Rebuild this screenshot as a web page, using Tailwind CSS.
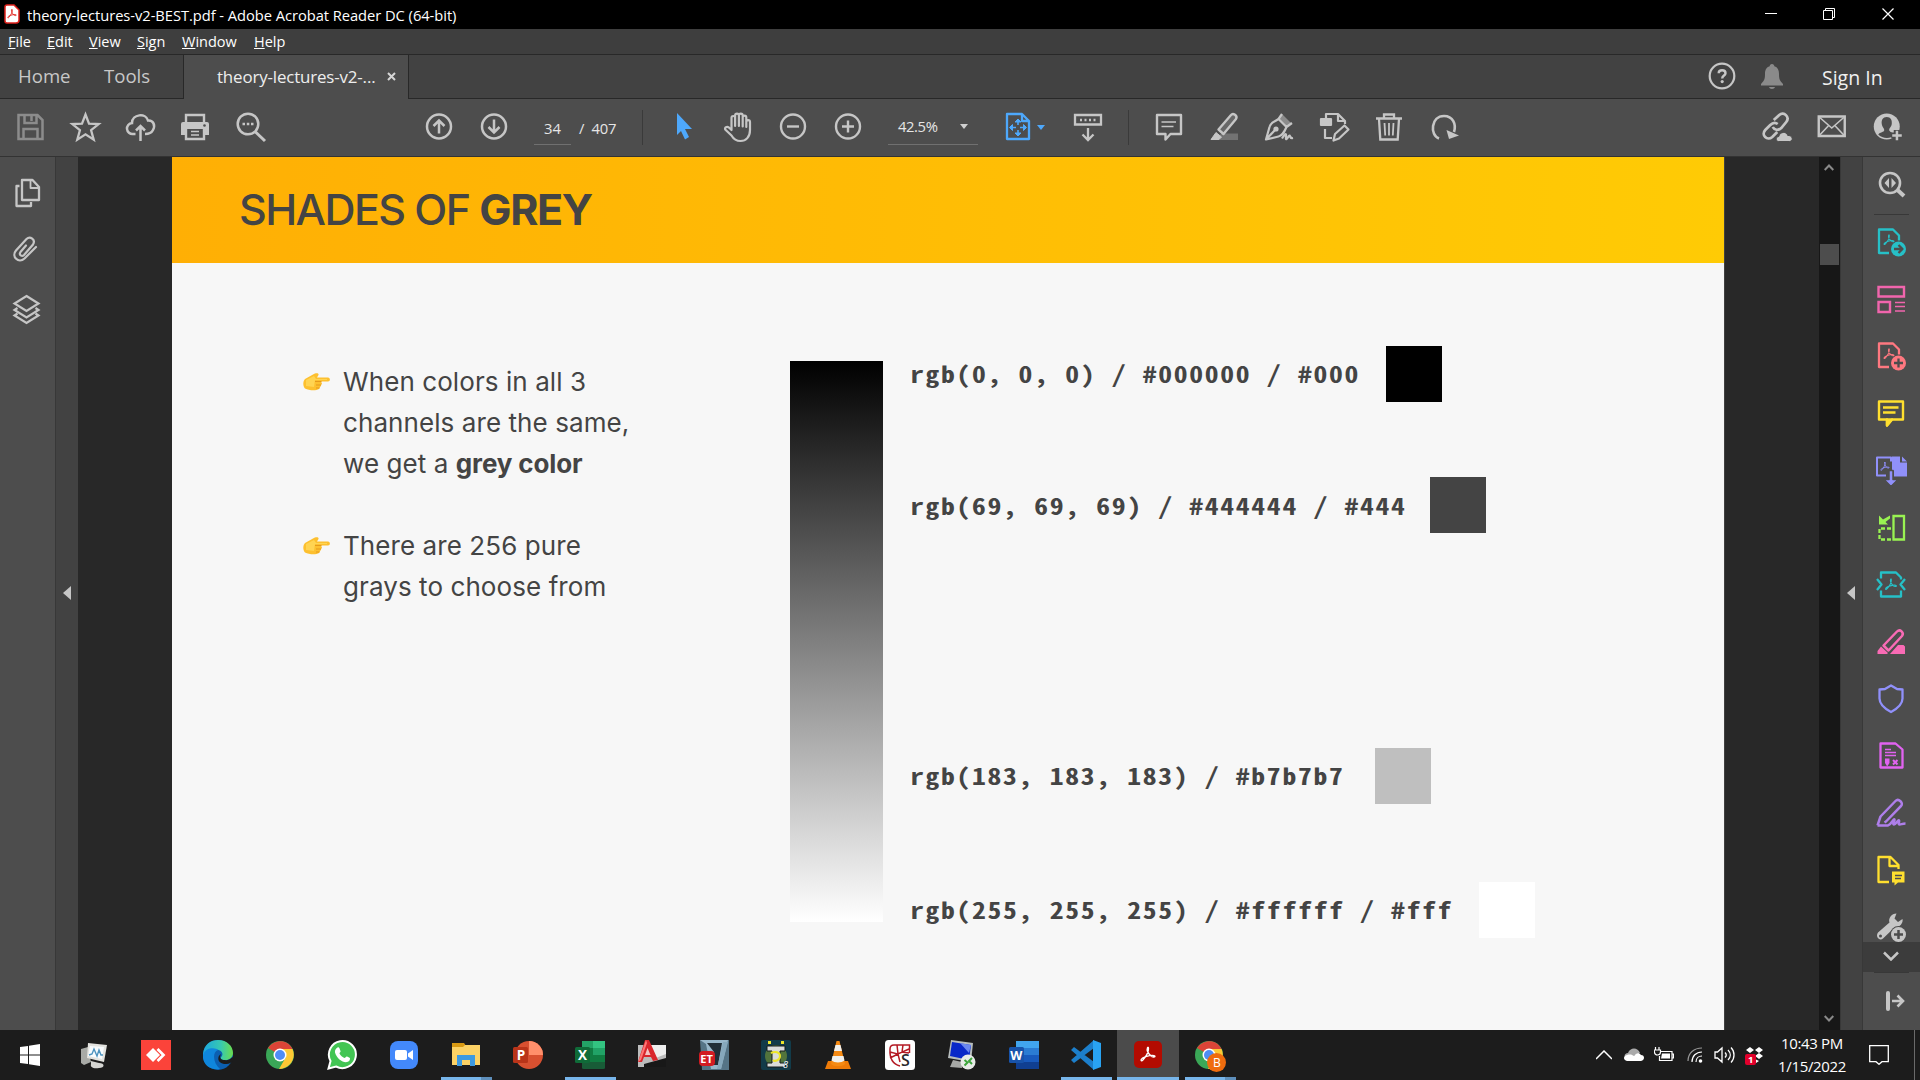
<!DOCTYPE html>
<html lang="en">
<head>
<meta charset="utf-8">
<title>theory-lectures-v2-BEST.pdf - Adobe Acrobat Reader DC (64-bit)</title>
<script src="https://cdn.jsdelivr.net/npm/@tailwindcss/browser@4"></script>
</head>
<body class="w-[1920px] h-[1080px] overflow-hidden bg-[#282828] font-['Open_Sans','Noto_Sans',sans-serif] flex flex-col">

<svg class="hidden">
  <symbol id="pdfmark" viewBox="0 0 20 20"><path fill="none" stroke="currentColor" stroke-width="1.6" stroke-linecap="round" stroke-linejoin="round" d="M9.500 2.500C8.500 5 10.500 9 13 11.500C15 13.500 18.500 13 17.500 11.700C16 10 8 11.500 4 14C1 16 2.500 18.500 4.500 16C7.500 12.500 10.500 7 10.500 3.500C10.500 2 9.900 1.700 9.500 2.500Z"/></symbol>
</svg>

<!-- Title bar -->
<header class="h-[29px] shrink-0 bg-black text-white flex items-center pl-1">
  <svg class="w-4 h-5 mb-px" viewBox="0 0 16 20"><path fill="#fff" stroke="#e0221c" stroke-width="1.500" d="M3 1h7l5 5v10a3 3 0 0 1-3 3H3a2 2 0 0 1-2-2V3a2 2 0 0 1 2-2z"/><use href="#pdfmark" x="2.500" y="4.500" width="11" height="11" color="#e0221c"/></svg>
  <span class="ml-[7px] text-[14.700px] leading-5 tracking-[-0.04px] whitespace-nowrap">theory-lectures-v2-BEST.pdf - Adobe Acrobat Reader DC (64-bit)</span>
  <div class="ml-auto flex h-full">
    <svg class="w-[58px] h-[29px]" viewBox="0 0 58 29"><path stroke="#fff" d="M22 13.500h12"/></svg>
    <svg class="w-[58px] h-[29px]" viewBox="0 0 58 29" fill="none" stroke="#fff"><path d="M22.500 10.500h9v9h-9zM24.500 10v-1.500h9v9H32"/></svg>
    <svg class="w-[61px] h-[29px]" viewBox="0 0 61 29" fill="none" stroke="#fff" stroke-width="1.200"><path d="M23.500 8.500l11 11M34.500 8.500l-11 11"/></svg>
  </div>
</header>

<!-- Menu bar -->
<nav class="h-[26px] shrink-0 bg-[#3e3e3e] border-b border-[#282828] text-white text-[14.500px] leading-[25px] flex pl-2 gap-4">
  <span class="w-[23px] whitespace-nowrap"><u>F</u>ile</span>
  <span class="w-[26px] whitespace-nowrap"><u>E</u>dit</span>
  <span class="w-[32px] whitespace-nowrap"><u>V</u>iew</span>
  <span class="w-[29px] whitespace-nowrap"><u>S</u>ign</span>
  <span class="w-[56px] whitespace-nowrap"><u>W</u>indow</span>
  <span class="whitespace-nowrap"><u>H</u>elp</span>
</nav>

<!-- Document tabs -->
<nav class="h-[44px] shrink-0 bg-[#424242] flex text-[#c8c8c8]">
  <div class="w-[184px] border-r border-b border-[#282828] flex items-center pl-[18px] text-[18.600px] pb-px">
    <span class="w-[86px]">Home</span><span>Tools</span>
  </div>
  <div class="w-[225px] bg-[#4d4d4d] border-r border-[#282828] flex items-center pl-[33px] text-[#ededed] text-[16.900px]">
    <span class="w-[170px] whitespace-nowrap tracking-[-0.15px]">theory-lectures-v2-...</span>
    <svg class="w-[9px] h-[9px] mb-px" viewBox="0 0 9 9"><path stroke="#d6d6d6" stroke-width="2" d="M1 1l7 7M8 1l-7 7"/></svg>
  </div>
  <div class="flex-1 border-b border-[#282828] flex items-center justify-end pr-[30px]">
    <svg class="w-7 h-7 mr-[25px] mb-[2px]" viewBox="0 0 28 28"><circle cx="14" cy="14" r="12.300" fill="none" stroke="#c6c6c6" stroke-width="2.200"/><path fill="none" stroke="#c6c6c6" stroke-width="2.400" d="M10.700 11.300c0-4 6.800-4 6.800 0c0 2.300-3.300 2.200-3.300 5.200"/><circle cx="14.200" cy="19.600" r="1.600" fill="#c6c6c6"/></svg>
    <svg class="w-[22px] h-[26px] mr-[39px]" viewBox="0 0 22 26" fill="#8a8a8a"><path d="M11 0c1.500 0 2.300 1 2.300 2.300c3.500 1 4.700 4 4.700 7.700c0 6.500 1.500 7 4 10v1.500H0V20c2.500-3 4-3.500 4-10c0-3.700 1.200-6.700 4.700-7.700C8.700 1 9.500 0 11 0zM8 23h6c-.5 2.500-5.500 2.500-6 0z"/></svg>
    <span class="w-[68px] text-[19.500px] leading-6 text-[#f0f0f0] font-medium whitespace-nowrap pt-[3px]">Sign In</span>
  </div>
</nav>

<!-- Toolbar -->
<div class="h-[58px] shrink-0 bg-[#4d4d4d] border-b border-[#333] flex items-center text-[#c6c6c6] pl-[3px] pb-px">
  <div class="flex w-[408px] *:w-[55px] *:h-8" >
    <svg viewBox="-11.500 0 55 32" fill="none" stroke="#8c8c8c" stroke-width="2.500"><path d="M4 4h19l5 5v19H4zM9 28V18h14v10M10 4v8h12V4M17 5v5"/></svg>
    <svg viewBox="-11.500 0 55 32" fill="none" stroke="currentColor" stroke-width="2.300"><path d="M16 3.500l3.500 9.100 9.700.5-7.600 6.100 2.600 9.500L16 23.300l-8.200 5.400 2.600-9.500-7.600-6.100 9.700-.5z"/></svg>
    <svg viewBox="-11.500 0 55 32" fill="none" stroke="currentColor" stroke-width="2.500"><path d="M11 23H8.500a5.500 5.500 0 0 1-1-11c0-9 14-10.500 16-2.500c5.500-.5 7.500 5 5 9.500c-1.500 3-4 4-8 4M16 30V15M11.500 19.500L16 15l4.500 4.500"/></svg>
    <svg viewBox="-11 0 55 32" fill="currentColor"><path fill="none" stroke="currentColor" stroke-width="2.400" d="M7 13V4h18v9"/><path d="M4 11h24a2 2 0 0 1 2 2v11h-4v-6H6v6H2V13a2 2 0 0 1 2-2z"/><circle cx="25.500" cy="14.500" r="1.300" fill="#4d4d4d"/><path fill="none" stroke="currentColor" stroke-width="2.400" d="M7 18v10h18V18"/><path stroke="currentColor" stroke-width="1.500" d="M12 20.500h8M12 24h8"/></svg>
    <svg viewBox="-12 0 55 32" fill="none" stroke="currentColor" stroke-width="2.500"><circle cx="13" cy="13" r="10.300"/><path stroke-width="3" d="M20 20.500l10 9.500"/><path stroke-width="2.500" d="M7.500 13H10M11.800 13h2.500M16 13h2.500"/></svg>
  </div>
  <div class="flex *:w-[55px] *:h-8">
    <svg viewBox="-12 0 55 32" fill="none" stroke="currentColor" stroke-width="2.500"><circle cx="16" cy="15.500" r="12"/><path d="M16 22.500V9.500M10.500 15L16 9.500l5.500 5.500"/></svg>
    <svg viewBox="-12 0 55 32" fill="none" stroke="currentColor" stroke-width="2.500"><circle cx="16" cy="15.500" r="12"/><path d="M16 8.500v13M10.500 16l5.500 5.500 5.500-5.500"/></svg>
  </div>
  <div class="w-[121px] flex h-[35px] text-[14.800px] leading-[36px] text-[#e6e6e6] pl-[13px] gap-2">
    <span class="w-[37px] text-center border-b border-[#707070]">34</span><span class="whitespace-pre tracking-[-0.2px]">/  407</span>
  </div>
  <div class="w-px h-[35px] bg-[#3a3a3a]"></div>
  <div class="flex ml-[13px] *:w-[55px] *:h-8">
    <svg viewBox="-12 0 55 32"><path fill="#4ea8fb" d="M9 2l15 16h-7l4 8-4 2.500-4-8.500-4 4z"/></svg>
    <svg viewBox="-11 0 55 32" fill="none" stroke="currentColor" stroke-width="2.200" stroke-linecap="round" stroke-linejoin="round"><path d="M9.500 19V6.800c0-2.400 3.600-2.400 3.600 0V15V4.500c0-2.600 3.800-2.600 3.800 0V15V4.500c0-2.400 3.800-2.400 3.800 0V15.500V6.500c0-2.400 3.600-2.400 3.600 0v9.500V11c0-2.400 3.700-2.400 3.700 0v8c0 7-4 11-9.500 11c-4.500 0-7-2-9-5.500L3.200 18.500c-.8-2.800 2.600-3.500 4.300-1.500z"/></svg>
    <svg viewBox="-11 0 55 32" fill="none" stroke="currentColor" stroke-width="2.400"><circle cx="16" cy="15.500" r="12"/><path d="M10 15.500h12"/></svg>
    <svg viewBox="-11 0 55 32" fill="none" stroke="currentColor" stroke-width="2.400"><circle cx="16" cy="15.500" r="12"/><path d="M10 15.500h12M16 9.500v12"/></svg>
  </div>
  <div class="ml-[12px] w-[90px] h-[35px] border-b border-[#707070] flex items-center text-[14.800px] text-[#e6e6e6] pl-[10px]">
    <span class="w-[62px] tracking-[-0.4px]">42.5%</span>
    <svg class="w-2 h-[5px]" viewBox="0 0 8 5"><path fill="#d0d0d0" d="M0 0h8L4 5z"/></svg>
  </div>
  <div class="ml-[24px] flex items-center">
    <svg class="w-8 h-8 text-[#4ea8fb]" viewBox="0 0 32 32" fill="none" stroke="currentColor" stroke-width="2.300" stroke-linejoin="round"><path d="M5 3h15l7 7v18H5zM20 3v7h7"/><path fill="currentColor" stroke-width="1" d="M16 8l3 3h-6zM16 25l3-3h-6zM7.500 16.500l3-3v6zM24.500 16.500l-3-3v6z"/><path stroke-width="1.600" d="M16 10v4M16 19v4M10 16.500h4M18 16.500h4"/></svg>
    <svg class="w-2 h-[5px] ml-[3px]" viewBox="0 0 8 5"><path fill="#4ea8fb" d="M0 0h8L4 5z"/></svg>
    <svg class="w-8 h-8 ml-[27px]" viewBox="0 0 32 32" fill="none" stroke="currentColor" stroke-width="2.300"><path d="M3 4h26v9.500H3zM16 17v12M10.500 23.500l5.500 5.500 5.500-5.500"/><path d="M8 9h2M12.500 9h2M17 9h2M21.500 9h2"/></svg>
  </div>
  <div class="w-px h-[35px] bg-[#3a3a3a] ml-6"></div>
  <div class="flex ml-[13px] *:w-[55px] *:h-8">
    <svg viewBox="-11 0 55 32" fill="none" stroke="currentColor" stroke-width="2.400" stroke-linejoin="round"><path d="M4 4h24v19H17.500L12.500 28.500V23H4z"/><path stroke-width="1.500" d="M8.500 11h14.500M8.500 15.500h12"/></svg>
    <svg viewBox="-11 0 55 32" fill="none" stroke="currentColor" stroke-width="2.400" stroke-linejoin="round"><path fill="#737373" stroke="none" d="M13 22.500h17V29H9z"/><path fill="#686868" d="M10.500 18.500L23 4c2-2.500 7 .5 5 4L15.500 23z"/><path fill="currentColor" stroke-width="1" d="M8 21.500l5.500 4.500-2.500 2.500H3z"/></svg>
    <svg viewBox="-11 0 55 32" fill="none" stroke="currentColor" stroke-width="2.200" stroke-linejoin="round"><path fill="#8c8c8c" stroke="none" d="M19 3l9 9-4 4-8-8z"/><path d="M19 3l-3.500 5 8 8 5.500-4M15.500 8c-4 3-8 3-9 8L3 28.500l12.500-3c4.500-1 6-5 8-9.500M3 28.500l9-9.500"/><circle cx="13" cy="18" r="1.500" fill="currentColor"/><path d="M19 27.500c3-5 4.500-6 4-1.500s1.500 1 3-1 0 3 4 2"/></svg>
    <svg viewBox="-11 0 55 32" fill="none" stroke="currentColor" stroke-width="2.200" stroke-linejoin="round"><path d="M8 9V3h12l7 7v3M20 3v7h7M7 18v9h7"/><path fill="currentColor" d="M3 8h10v6H3z"/><path d="M17 23L26.500 14.500l4 4L21 27.500l-5.500 2z"/></svg>
    <svg viewBox="-11 0 55 32" fill="none" stroke="currentColor" stroke-width="2.300"><path d="M3 7.500h26M11 7V3.500h10V7M6 8l1.300 20.500h17.400L26 8"/><path stroke-width="1.800" d="M11.500 12l.7 12.500M16 12v12.500M20.500 12l-.7 12.500"/></svg>
    <svg viewBox="-11 0 55 32" fill="none" stroke="currentColor" stroke-width="2.600"><path d="M11 27.500C1.500 24 3 5 16 5c9 0 12.500 8.500 10 16"/><path fill="currentColor" stroke="none" d="M18.500 19L31 24.500l-10 3.500z"/></svg>
  </div>
  <div class="ml-auto mr-[5px] flex *:w-[55.500px] *:h-8">
    <svg viewBox="-11 0 55 32" fill="none" stroke="currentColor" stroke-width="2.700"><path d="M13.500 9L19 4c4.500-4 11 2 7 7l-5 6c-3 3-7 2-8.500-1M17.500 13c-2-1.500-5-1.500-7.500 1l-5 5c-4.500 5 2 11.500 7 7l5-5"/><path fill="currentColor" stroke="#4d4d4d" stroke-width="1" d="M18 30.500c-3-.5-2.500-5 .5-5c1-5 8-5.500 9-1c5-.5 6 5.500 2 6z"/></svg>
    <svg viewBox="-11.500 0 55 32" fill="none" stroke="currentColor" stroke-width="2.400"><path d="M3 5.500h26v19.500H3z"/><path stroke-width="1.600" d="M4 6.500l12 10.500 12-10.500M4 24l8.500-9M28 24l-8.500-9"/></svg>
    <svg viewBox="-11 0 55 32"><circle cx="15.500" cy="15.500" r="13" fill="currentColor"/><path fill="#4d4d4d" d="M15.500 6c4 0 5.500 3 5 7c-.3 3-3 4-2.500 6.500c1 2 4 2 5 4.500C20 28 11 28 7 23.500c1.500-2.500 6-2 6-4.500c0-2-2.200-3-2.500-6c-.5-4 1-7 5-7z"/><path stroke="#4d4d4d" stroke-width="6" d="M20 24.500h11M25.500 19v11"/><path stroke="currentColor" stroke-width="2.500" d="M21 24.500h9.500M25.700 19.700v9.500"/></svg>
  </div>
</div>

<main class="h-[873px] shrink-0 flex">
  <!-- Left navigation pane -->
  <aside class="w-14 bg-[#4d4d4d] border-r border-[#383838] flex flex-col pl-[10px] pt-[20px] text-[#c6c6c6]">
    <svg class="w-8 h-8" viewBox="0 0 32 32" fill="none" stroke="currentColor" stroke-width="2.300" stroke-linejoin="round"><path d="M12 3h10.500L29 10v13H12z"/><path d="M20.500 3v8H29" stroke-width="1.800"/><path d="M9.500 9H6.500v20H21v-4"/></svg>
    <svg class="w-8 h-8 mt-[24px]" viewBox="0 0 32 32" fill="none" stroke="currentColor" stroke-width="2.200" stroke-linecap="round"><path d="M17 11.500l-5.500 6.500c-2 3 1.500 5 3.500 3l9-10.500c3-5-3-9-6.500-5.500L7 16.500c-5 6 2.500 13.500 8.500 8L27 13" transform="translate(-1,1)"/></svg>
    <svg class="w-8 h-8 mt-[28px]" viewBox="0 0 32 32" fill="none" stroke="currentColor" stroke-width="2.200"><path d="M16.500 3L28.500 10.500 16.500 18 4.500 10.500z"/><path d="M7.500 15l-3 2 12 7.500 12-7.500-3-2M7.500 20.500l-3 2 12 7.500 12-7.500-3-2"/></svg>
  </aside>
  <div class="w-[22px] bg-[#424242] flex items-center justify-center pb-[2px]">
    <svg class="w-2 h-[14px]" viewBox="0 0 8 14"><path fill="#c6c6c6" d="M8 0v14L0 7z"/></svg>
  </div>
  <div class="w-[94px] bg-[#282828]"></div>

  <!-- Slide -->
  <article class="w-[1552px] bg-[#f7f7f7] font-['Inter',sans-serif] text-[#444]">
    <h1 class="h-[106px] bg-linear-to-r/srgb from-[#ffaf05] to-[#ffcb05] pl-[67px] text-[43px] leading-[105px] font-medium tracking-[-1.600px] whitespace-nowrap">SHADES OF <b class="font-bold tracking-[-1.350px]">GREY</b></h1>
    <div class="flex">
      <ul class="pt-[98px] pl-[130px] w-[618px] text-[26px] leading-[41px] tracking-[0.080px]">
        <li class="flex gap-[13px] mb-[41px]">
          <svg class="w-[27px] h-[18px] mt-[12px] ml-px" viewBox="0 0 27 18"><path fill="#fdc02f" d="M2 6l8-4.500c3-2 6-1.500 5.500.5L14 4.500h11c2.500 0 2.500 4 0 4h-7l1 2-1.500 3-1.500 2.500C13 18 6 17.500 2 15.500C-.5 13 0 8 2 6z"/><path fill="none" stroke="#e59a1c" d="M12 8.500h6.500M13 12h5M13 15h3.500"/><path fill="#ffd452" d="M3 7l8-4 2 3h11v1H12l-1 7-8-1z"/></svg>
          <p class="whitespace-nowrap">When colors in all 3<br>channels are the same,<br>we get a <b class="font-bold tracking-[-0.150px]">grey color</b></p>
        </li>
        <li class="flex gap-[13px]">
          <svg class="w-[27px] h-[18px] mt-[12px] ml-px" viewBox="0 0 27 18"><path fill="#fdc02f" d="M2 6l8-4.500c3-2 6-1.500 5.500.5L14 4.500h11c2.500 0 2.500 4 0 4h-7l1 2-1.500 3-1.500 2.500C13 18 6 17.500 2 15.500C-.5 13 0 8 2 6z"/><path fill="none" stroke="#e59a1c" d="M12 8.500h6.500M13 12h5M13 15h3.500"/><path fill="#ffd452" d="M3 7l8-4 2 3h11v1H12l-1 7-8-1z"/></svg>
          <p class="whitespace-nowrap">There are 256 pure<br>grays to choose from</p>
        </li>
      </ul>
      <div class="w-[93px] h-[561px] mt-[98px] bg-linear-to-b/srgb from-black to-white"></div>
      <div class="pl-[27px] pt-[83px] font-['Noto_Sans_Mono_CJK_SC','DejaVu_Sans_Mono',monospace] font-bold text-[23px] tracking-[1.430px] leading-[55px] whitespace-nowrap">
        <div class="flex h-14"><span class="w-[476px]"><span class="inline-block origin-left scale-x-120">rgb(0, 0, 0) / #000000 / #000</span></span><i class="size-14 bg-black"></i></div>
        <div class="flex h-14 mt-[75px]"><span class="w-[520px]"><span class="inline-block origin-left scale-x-120 pt-px">rgb(69, 69, 69) / #444444 / #444</span></span><i class="size-14 bg-[#444]"></i></div>
        <div class="flex h-14 mt-[215px]"><span class="w-[465px]"><span class="inline-block origin-left scale-x-120">rgb(183, 183, 183) / #b7b7b7</span></span><i class="size-14 bg-[#bfbfbf]"></i></div>
        <div class="flex h-14 mt-[78px]"><span class="w-[569px]"><span class="inline-block origin-left scale-x-120">rgb(255, 255, 255) / #ffffff / #fff</span></span><i class="size-14 bg-white"></i></div>
      </div>
    </div>
  </article>
  <div class="w-[95px] bg-[#282828] border-l border-[#404040]"></div>

  <!-- Scrollbar -->
  <div class="w-[21px] bg-[#171717] flex flex-col items-center pt-[7px] pb-[8px]">
    <svg class="w-[10px] h-[7px] mr-px" viewBox="0 0 10 7"><path fill="none" stroke="#8a8a8a" stroke-width="2" d="M.7 6L5 1.500 9.300 6"/></svg>
    <div class="w-[19px] h-[21px] mt-[73px] bg-[#4d4d4d]"></div>
    <svg class="w-[10px] h-[7px] mt-auto mr-px" viewBox="0 0 10 7"><path fill="none" stroke="#8a8a8a" stroke-width="2" d="M.7 1L5 5.500 9.300 1"/></svg>
  </div>
  <div class="w-[23px] bg-[#424242] border-x border-[#383838] flex items-center justify-center pb-[2px] pr-[2px]">
    <svg class="w-2 h-[14px]" viewBox="0 0 8 14"><path fill="#c6c6c6" d="M8 0v14L0 7z"/></svg>
  </div>

  <!-- Tools pane -->
  <aside class="w-[57px] bg-[#4d4d4d] flex flex-col items-center text-[#c6c6c6]">
    <svg class="w-8 h-[57px] shrink-0" viewBox="0.500 0 32 57" fill="none" stroke="currentColor" stroke-width="2.600"><circle cx="14.500" cy="26" r="10"/><path stroke-width="4" d="M22 33l6.500 6"/><path fill="currentColor" stroke="none" d="M13.500 21v10l-4.500-5zM16 21v10l4.500-5z"/></svg>
    <div class="w-[35px] h-px shrink-0 bg-[#383838]"></div>
    <div class="h-[727px] shrink-0 overflow-hidden flex flex-col mr-px *:w-8 *:h-[57px] *:shrink-0 *:pt-[11px] *:pb-[13px]">
      <svg class="text-[#26c0c7]" viewBox="0 0 32 32" fill="none" stroke="currentColor" stroke-width="2.300" stroke-linejoin="round"><path d="M14 26.500H4V3h14l6 6v5"/><use href="#pdfmark" x="7.500" y="7" width="13" height="13"/><circle cx="23.500" cy="22.500" r="7.500" fill="currentColor" stroke="none"/><path stroke="#4d4d4d" d="M19 22.500h8M23.500 18.500l4 4-4 4"/></svg>
      <svg class="text-[#f165ad]" viewBox="0 0 32 32" fill="none" stroke="currentColor" stroke-width="2.400"><path d="M3.500 3.500h25.500v9.500h-25.500zM3.500 18.500H15v10H3.500z"/><path stroke-width="1.500" d="M20 19h10M20 23h10M20 27.500h10"/></svg>
      <svg class="text-[#ff7880]" viewBox="0 0 32 32" fill="none" stroke="currentColor" stroke-width="2.300" stroke-linejoin="round"><path d="M14 26.500H4V3h14l6 6v5"/><use href="#pdfmark" x="7.500" y="7" width="13" height="13"/><circle cx="23.500" cy="22.500" r="7.500" fill="currentColor" stroke="none"/><path stroke="#4d4d4d" d="M19 22.500h9M23.500 18v9"/></svg>
      <svg class="text-[#ffdf2f]" viewBox="0 0 32 32" fill="none" stroke="currentColor" stroke-width="2.400" stroke-linejoin="round"><path fill="currentColor" d="M12 22v6l5-6z"/><path d="M4 4h24v18H17l-5 6v-6H4z"/><path d="M8 10h15.500M8 15h12.500"/></svg>
      <svg class="text-[#9090fa]" viewBox="0 0 32 32" fill="none" stroke="currentColor" stroke-width="2" stroke-linejoin="round"><path d="M11 21H2V3h14v4"/><use href="#pdfmark" x="4.500" y="6.500" width="11" height="11"/><path fill="currentColor" stroke="none" d="M17 2h8v6h7v14H19v-6h-2zM27 2l5 5h-5z"/><path fill="currentColor" stroke="#4d4d4d" stroke-width="1.500" d="M14 16h4v9h5l-7 7-7-7h5z"/></svg>
      <svg class="text-[#99f352]" viewBox="0 0 32 32" fill="none" stroke="currentColor" stroke-width="2.300"><path d="M18.500 4.500h10.500v23.500H18.500z"/><path stroke-dasharray="4 2" d="M16 17H4.500v11H16"/><path fill="currentColor" stroke="none" d="M4 4v9h9L10.500 10.500 15 7V4L8 8z"/></svg>
      <svg class="text-[#26c0c7]" viewBox="0 0 32 32" fill="none" stroke="currentColor" stroke-width="2.300" stroke-linejoin="round"><path d="M6 10V4h15l5 5v2M6 22v6h20v-6M2 10.500l4.500 5.500L2 21.500M30 10.500L25.500 16l4.500 5.500"/><use href="#pdfmark" x="9" y="9" width="14" height="14"/></svg>
      <svg class="text-[#f96bb5]" viewBox="0 0 32 32" fill="none" stroke="currentColor" stroke-width="2.500" stroke-linejoin="round"><path d="M8.500 20L22 6c3-3 7.500 1 5 4.500L13.500 25z"/><path fill="currentColor" stroke="none" d="M6 21l7 6.500-1 1H2.500v-3zM23 19.500h5.500L30 21v7.500H15z"/></svg>
      <svg class="text-[#9090fa]" viewBox="0 0 32 32" fill="none" stroke="currentColor" stroke-width="2.300" stroke-linejoin="round"><path d="M16 3l6 3.500 5.500.5v9c0 6-5 10-11.500 13.500C9.500 26 4.500 22 4.500 16V7l5.500-.5z"/></svg>
      <svg class="text-[#e163f0]" viewBox="0 0 32 32" fill="none" stroke="currentColor" stroke-width="2.300" stroke-linejoin="round"><path d="M5.500 4h15l7 6v18H5.500z"/><path stroke-width="1.500" d="M10 10h6M10 13h11M10 16h11"/><path fill="currentColor" stroke="none" d="M10 19h4.500v4.500L12.200 27 10 23.500z"/><path stroke-width="2" d="M18 20.500l4.500 4.500M22.500 20.500L18 25"/></svg>
      <svg class="text-[#ae7eea]" viewBox="0 0 32 32" fill="none" stroke="currentColor" stroke-width="2.500" stroke-linejoin="round"><path d="M2.500 29l3-9L20.500 4.500c3-3 8.500 2 5.500 5L11 25l-1.500 1M2.500 29h10.500c4-2 5.500-7 6.500-6s-2.500 5-.5 5 4-5 5-4-1.500 4 .5 4 2.500-1 6-1"/></svg>
      <svg class="text-[#ffdf2f]" viewBox="0 0 32 32" fill="none" stroke="currentColor" stroke-width="2.300" stroke-linejoin="round"><path d="M14 28.500H3.500V3.500h12l8 8v4M14.500 4v8.500H23"/><path fill="currentColor" stroke="none" d="M18 18h11.500v11H23l-3.500 3v-3H17v-11z"/><path stroke="#4d4d4d" stroke-width="1.500" d="M20 22h7M20 25h6"/></svg>
      <svg viewBox="0 0 32 32"><path fill="currentColor" d="M3 22L14.500 12c-1.500-4 2-9 7-9l-2 5 3.500 3.500 4.500-3c1 4-3 9-8 8.500L8 28c-3.500 3-8-2-5-6z"/><circle cx="5.500" cy="25.500" r="1.500" fill="#4d4d4d"/><circle cx="23.500" cy="24" r="8.500" fill="#4d4d4d"/><circle cx="23.500" cy="24" r="7.500" fill="currentColor"/><path stroke="#4d4d4d" stroke-width="2.500" d="M19 24h9M23.500 19.500v9"/></svg>
    </div>
    <div class="w-full h-[30px] shrink-0 bg-[#3c3c3c] flex items-center justify-center pb-[2px] pr-px"><svg class="w-4 h-[10px]" viewBox="0 0 16 10"><path fill="none" stroke="#c6c6c6" stroke-width="2.500" d="M1 1.500l7 7 7-7"/></svg></div>
    <div class="w-[35px] h-px shrink-0 bg-[#383838]"></div>
    <svg class="w-8 h-[56px] shrink-0" viewBox="-2 0 32 56" fill="none" stroke="currentColor" stroke-width="2.600"><path stroke-width="4" stroke-linecap="round" d="M10 20v16"/><path d="M14 28h10M19.500 22.500L25 28l-5.500 5.500"/></svg>
  </aside>
</main>

<!-- Taskbar -->
<footer class="h-[50px] shrink-0 bg-[#1c1c1c] flex">
  <div class="flex *:w-[62px] *:h-[50px] *:flex *:flex-col *:items-center *:shrink-0">
    <div class="pt-[14px] pr-[2px]"><svg class="w-5 h-[22px]" viewBox="0 0 20 22" fill="#fff"><path d="M0 3l8-1v8.500H0zM9 1.800L20 0v10.500H9zM0 11.500h8V20l-8-1zM9 11.500h11V22L9 20.200z"/></svg></div>
    <div class="pt-[10px] ml-px"><svg class="w-8 h-[30px]" viewBox="0 0 32 30"><path fill="#a8aaa6" d="M3 9l7-2 3 15-7 3-3-2z"/><path fill="#e3e3df" d="M10 3l19 2-3 17-17-4z"/><path fill="#f8fcfe" d="M12 6l14 1-2 12-14-3z"/><path fill="none" stroke="#4c93bf" stroke-width="1.400" d="M11 15l3-1 2-5 3 7 2-6 2 5h2"/><path fill="#d5d5d2" d="M13 21l8 2c6 0 6 5 0 5-6 1-9-1-8-4z"/></svg></div>
    <div class="pt-[10px]"><svg class="size-[30px]" viewBox="0 0 30 30"><path fill="#fb433a" d="M0 0h30v30H0z"/><path fill="#fff" d="M5 15l7-7 7 7-7 7z"/><path fill="none" stroke="#fff" stroke-width="2.700" d="M16.500 9l6 6-6 6"/></svg></div>
    <div class="pt-[10px]"><svg class="size-[30px]" viewBox="0 0 30 30"><defs><linearGradient id="eg"><stop stop-color="#1ba6df"/><stop offset=".6" stop-color="#38c9b0"/><stop offset="1" stop-color="#6bdd4c"/></linearGradient></defs><circle cx="15" cy="15" r="15" fill="#0c5fb0"/><path fill="url(#eg)" d="M0 14C1 4 8 0 15 0c9 0 15 6 15 13 0 5-5 8-10 7-3-1-3-2-1-4 2-4-3-7-7-6C6 10 2 12 0 18z"/><path fill="#0f86dc" d="M0 15c2-8 13-8 15-5-6 2-5 13 2 19C6 31-1 23 0 15z"/><path fill="#1c1c1c" d="M18 14c-2 4 0 6 4 6 4 1 6-2 8-3v4c-3 3-6 3-9 3-7-1-7-8-3-10z"/></svg></div>
    <div class="pt-[11px]"><svg class="size-7" viewBox="0 0 28 28"><circle cx="14" cy="14" r="14" fill="#3aa757"/><path fill="#db4437" d="M14 14L2 7C8-2.300 22-2.300 26.500 8H14z"/><path fill="#fdc934" d="M14 8h12.500C31 18 23 28 13 28l7-12z"/><circle cx="14" cy="14" r="6.500" fill="#fff"/><circle cx="14" cy="14" r="5" fill="#4f8df5"/></svg></div>
    <div class="pt-[10px]"><svg class="size-[30px]" viewBox="0 0 30 30"><path fill="#42c553" stroke="#fff" stroke-width="2" d="M1.500 28.500L3.500 21A13.500 13.500 0 1 1 9 26.500z"/><path fill="#fff" d="M10.500 7.500c1.500-1 2 .5 3 3.500.5 1-1 1.500-1 2.500 1 2 3 4 5 4.500 1 0 1.500-2 2.500-1.500 3.500 1.500 3.500 1.500 2.500 4C19 25 10 20 8 12.500c-.3-2 .5-4 2.500-5z"/></svg></div>
    <div class="pt-[11px]"><svg class="size-7" viewBox="0 0 28 28"><rect width="28" height="28" rx="8" fill="#4389fb"/><rect x="5" y="9" width="12" height="10" rx="2" fill="#fff"/><path fill="#fff" d="M18 12.500L23 9v10l-5-3.500z"/></svg></div>
    <div class="pt-[13px]"><svg class="w-7 h-[23px]" viewBox="0 0 28 23"><path fill="#d99a13" d="M0 0h12l2 3-1 5H0z"/><path fill="#fcd265" d="M0 4h11l2-2h15v20H0z"/><path fill="#3e9ae0" d="M5 12h18v11h-5v-6h-8v6H5z"/></svg><div class="mt-auto flex h-[3px]"><i class="w-10 bg-[#77b5ea]"></i><i class="w-[11px] bg-[#5e8fbb]"></i></div></div>
    <div class="pt-[11px]"><svg class="w-[30px] h-7" viewBox="0 0 30 28"><circle cx="16" cy="14" r="14" fill="#d85030"/><path fill="#ff8f6b" d="M16 0a14 14 0 0 1 14 14H16z"/><rect y="6" width="15" height="16" rx="1.500" fill="#b93419"/><text x="3.800" y="19" font-size="13.500" font-weight="700" fill="#fff">P</text></svg></div>
    <div class="pt-[11px]"><svg class="w-[30px] h-7" viewBox="0 0 30 28"><rect x="7" width="23" height="28" rx="1.500" fill="#185c37"/><path fill="#23a366" d="M7 0h11v7H7z"/><path fill="#33c481" d="M18 0h12v7H18z"/><path fill="#107c41" d="M7 7h11v14H7z"/><path fill="#21a366" d="M18 7h12v7H18z"/><path fill="#107c41" d="M18 14h12v7H18z"/><rect y="6" width="15" height="16" rx="1.500" fill="#0f6b38"/><text x="3" y="19" font-size="13.500" font-weight="700" fill="#fff">X</text></svg><i class="mt-auto w-[51px] h-[3px] bg-[#77b5ea]"></i></div>
    <div class="pt-[10px]"><svg class="w-7 h-[30px]" viewBox="0 0 28 30"><path fill="#bcbcbc" d="M0 5h28v22H0z"/><path fill="#eee" d="M8 5h20v9L15 19z"/><path fill="#181818" d="M6 24l22-6v9H6z"/><path fill="#d9262c" d="M0 22L7 0h4l9 20-5 1-2-4H6l-2 5z"/><path fill="#f4c4c4" d="M9.500 8l3 7H7z"/><path fill="#ff7776" d="M8 0l1 3L3 20l-3 2z"/></svg></div>
    <div class="pt-[10px]"><svg class="w-[30px] h-[30px]" viewBox="0 0 30 30"><path fill="#557486" d="M1 0h29v30H3z"/><path fill="#98b7ca" d="M1 0h28l-7 29H12L7 4z"/><path fill="#222f38" d="M8 3h15l-4 22h-4V12z"/><path fill="#86a8bc" d="M24 2h5l-7 27h-4z"/><rect y="11" width="16" height="15" rx="4" fill="#d21b22"/><text x="1.300" y="22.500" font-size="11" font-weight="700" fill="#fff">ET</text></svg></div>
    <div class="pt-[10px]"><svg class="size-[30px]" viewBox="0 0 30 30"><rect width="30" height="30" rx="2" fill="#123b49"/><circle cx="15" cy="16" r="11" fill="#52743c"/><path fill="#d9dcda" stroke="#171d1c" d="M6 6h18v5h-5v12h5v4H6v-4h5V11H6z"/><path fill="#ece52a" d="M7 1h3v3H7zM20 1h3v3h-3z"/><path fill="none" stroke="#ece52a" stroke-width="2" d="M10 13c4-2 9-1 9 3s-5 6-7 4"/><text x="22" y="28" font-size="9" font-style="italic" fill="#fff">8</text></svg></div>
    <div class="pt-[10px]"><svg class="w-[26px] h-[30px]" viewBox="0 0 26 30"><path fill="#ee7b08" d="M3 21h20l3 8H0z"/><path fill="#f58a13" d="M11.500 1h3L20 24c-3 3-11 3-14 0z"/><path fill="#f0f0ee" d="M10.500 5h5l1.500 6H9zM7.500 16h11l1 4.500c-3 2.500-10 2.500-13 0z"/></svg></div>
    <div class="pt-[10px]"><svg class="size-[30px]" viewBox="0 0 30 30"><rect width="30" height="30" rx="3.500" fill="#fff"/><path fill="none" stroke="#b41a24" stroke-width="1.500" d="M15 26C7 24 4.500 18 5 9c0-3 1-4 4-4h15.500v8M5 12l8 2 2 8M12 5l1 9 11-5M5 18l8-4M18 5l-1 7 7 1"/><text x="16" y="25.500" font-size="16" font-weight="600" fill="#28282c">S</text></svg></div>
    <div class="pt-[10px]"><svg class="size-[30px]" viewBox="0 0 30 30"><path fill="#b7bdbd" d="M4 0l22 3-2 19-23-4z"/><path fill="#0928c8" d="M5 2l19 3-2 15-19-4z"/><path fill="#6b88ef" d="M13 3l11 2-2 8z"/><path fill="#a6a8a5" d="M6 20l9 2v6l-12-1z"/><circle cx="21" cy="22" r="7.500" fill="#e8ebe8"/><path fill="none" stroke="#3da63c" stroke-width="2" d="M17.500 20l3 2.500-3 3M25 18l-3 3 3 3"/></svg></div>
    <div class="pt-[11px]"><svg class="w-[30px] h-7" viewBox="0 0 30 28"><path fill="#41a5ee" d="M7 0h23v7H7z"/><path fill="#2b7cd3" d="M7 7h23v7H7z"/><path fill="#185abd" d="M7 14h23v7H7z"/><path fill="#103f91" d="M7 21h23v7H7z"/><rect y="6" width="15" height="16" rx="1.500" fill="#1853aa"/><text x="1.300" y="18.500" font-size="12.500" font-weight="700" fill="#fff">W</text></svg></div>
    <div class="pt-[10px]"><svg class="size-[30px]" viewBox="0 0 30 30"><path fill="#1c7fcb" d="M23 0v8L3 23l-3-3zM3 7l20 15v8L0 10z"/><path fill="#29a3f2" d="M22 0l8 3v24l-8 3z"/></svg><i class="mt-auto w-[51px] h-[3px] bg-[#77b5ea]"></i></div>
    <div class="pt-[11px] bg-[#4b4b4b]"><svg class="size-7" viewBox="0 0 28 28"><rect width="28" height="27" rx="5" fill="#b30b00"/><use href="#pdfmark" x="5" y="4" width="18" height="19" color="#fff"/></svg><i class="mt-auto w-[62px] h-[3px] bg-[#77b5ea]"></i></div>
    <div class="pt-[11px]"><svg class="w-[31px] h-[31px]" viewBox="0 0 31 31"><circle cx="14" cy="14" r="14" fill="#3aa757"/><path fill="#db4437" d="M14 14L2 7C8-2.300 22-2.300 26.500 8H14z"/><path fill="#fdc934" d="M14 8h12.500C31 18 23 28 13 28l7-12z"/><circle cx="14" cy="14" r="6.500" fill="#fff"/><circle cx="14" cy="14" r="5" fill="#4f8df5"/><circle cx="21.500" cy="21.500" r="9.500" fill="#ef6c0e"/><text x="18" y="26" font-size="12" fill="#fff">B</text></svg><div class="mt-auto flex h-[3px]"><i class="w-10 bg-[#77b5ea]"></i><i class="w-[11px] bg-[#5e8fbb]"></i></div></div>
  </div>
  <div class="ml-auto flex items-center text-white h-full">
    <svg class="w-4 h-[10px]" viewBox="0 0 16 10"><path fill="none" stroke="#fff" stroke-width="1.500" d="M0 9l8-8 8 8"/></svg>
    <svg class="w-5 h-[14px] ml-3" viewBox="0 0 20 14"><path fill="#aaa" d="M4 11C-1 10 0 5 4 5c2-6 10-6 12 0z"/><path fill="#fff" d="M3 13c-4-1-4-5 0-6 4-1 5 0 7 1 2-3 5-4 7-1 4 0 4 5 0 6z"/></svg>
    <svg class="w-5 h-4 ml-[10px]" viewBox="0 0 20 16" fill="none" stroke="#fff" stroke-width="1.200"><path d="M7 4.500h11v9H5.500V9M18 7h1.500v4H18M1.500 0v3M5 0v3M0 3h6.500v2c0 2-1.500 3-3 3s-3-1-3-3z"/><path fill="#fff" stroke="none" d="M8 6.500h8v5H7z"/></svg>
    <svg class="w-4 h-4 ml-[13px]" viewBox="0 0 16 16" fill="none" stroke="#999" stroke-width="1.200"><path d="M1 14C1 6 7 1 15 1"/><path stroke="#fff" d="M5 15c0-6 4-10 10-10M9 15c0-4 3-6 6-6"/><circle cx="13.500" cy="14" r="1.800" fill="#fff" stroke="none"/></svg>
    <svg class="w-[21px] h-[18px] ml-[11px]" viewBox="0 0 21 18" fill="none" stroke="#fff" stroke-width="1.300"><path d="M1 6h2.500L8 2v14l-4.500-4H1zM11 6.500c1.500 1.500 1.500 3.500 0 5M14 4c3 3 3 7 0 10M17 1.500c4 4 4 11 0 15"/></svg>
    <svg class="w-[19px] h-[19px] ml-[10px]" viewBox="0 0 19 19"><path fill="#fff" d="M1 4l4-3 4 3-4 3zM10 4l4-3 4 3-4 3zM10 10l4-3 4 3-4 3zM10 13l4 2-3 2z"/><rect y="8" width="11" height="11" rx="2" fill="#e2002b"/><text x="3" y="17" font-size="9.500" font-weight="700" fill="#fff">1</text></svg>
    <div class="ml-[10px] w-[76px] text-center text-[15px] leading-[23px] tracking-[-0.35px] whitespace-nowrap">10:43 PM<br>1/15/2022</div>
    <svg class="w-5 h-5 ml-[19px] mr-[25px]" viewBox="0 0 20 20"><path fill="none" stroke="#fff" stroke-width="1.300" d="M.7.700h18.600v16H13L10 19.300 7 16.700H.7z"/></svg>
    <div class="w-[6px] h-full border-l border-[#6a6a6a]"></div>
  </div>
</footer>
</body>
</html>
